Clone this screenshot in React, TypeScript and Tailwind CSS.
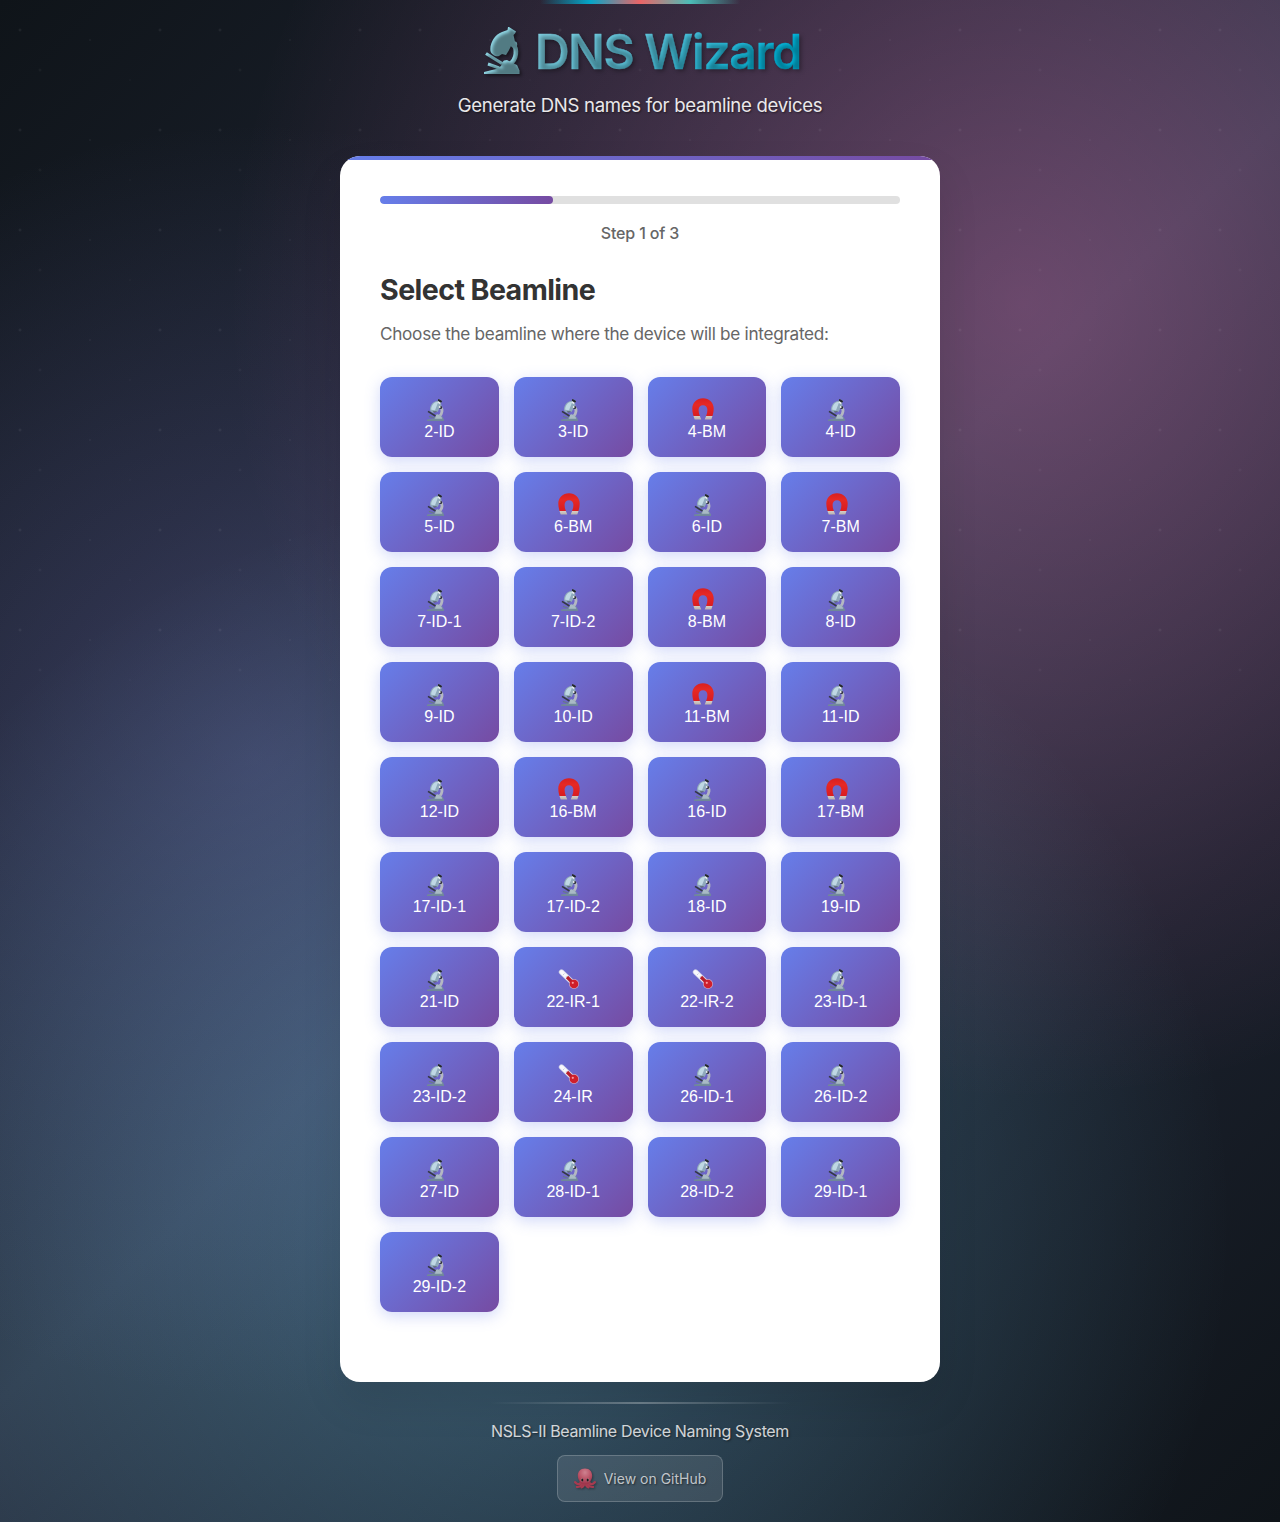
const beamlines = [
  "2-ID", "3-ID", "4-BM", "4-ID",
  "5-ID", "6-BM", "6-ID", "7-BM",
  "7-ID-1", "7-ID-2", "8-BM", "8-ID",
  "9-ID", "10-ID", "11-BM", "11-ID",
  "12-ID", "16-BM", "16-ID", "17-BM",
  "17-ID-1", "17-ID-2", "18-ID", "19-ID",
  "21-ID", "22-IR-1", "22-IR-2", "23-ID-1",
  "23-ID-2", "24-IR", "26-ID-1", "26-ID-2",
  "27-ID", "28-ID-1", "28-ID-2", "29-ID-1",
  "29-ID-2",
];

const BODY = "M18 5 L23.5 3 L24 0 L25 0 L32 4.5 L31 6.5 L29.5 8 L31 15 L27 19 L24.5 24 L22 28 L18 27 L15 29 C12 30 7.5 28 6.5 24 C5.5 17 10 8 18 5Z";
const BASE = "M17 39 L18 35.5 L20 33.5 L23 33 L26 34.5 L33 38 L35.5 43.5 V47 H0 V45 L12 42Z";
const ARM = "M29 17 C33.5 22 33 32 26 37";
const STAGE = "M2 26.5 L18 36.5";
const MIRROR = "M4 37 L15 41";

/* One-colour microscope used for the heading and its shadow. */
function MicroscopeShape({ color }: { color: string }) {
  return (
    <g fill={color} stroke={color} strokeWidth="0">
      <path d={BODY} />
      <path d={ARM} fill="none" strokeWidth="4.6" />
      <circle cx="30" cy="17.5" r="3.2" />
      <path d={STAGE} fill="none" strokeWidth="3.2" />
      <path d={MIRROR} fill="none" strokeWidth="3" />
      <path d={BASE} />
    </g>
  );
}

function TitleMicroscope() {
  return (
    <svg width="36" height="47" viewBox="0 0 36 47" className="mt-[-4px] overflow-visible">
      <defs>
        <filter id="soft" x="-30%" y="-30%" width="160%" height="160%">
          <feGaussianBlur stdDeviation="1.7" />
        </filter>
      </defs>
      <MicroscopeShape color="#8fd6e4" />
      <g filter="url(#soft)" transform="translate(2 2)" opacity="0.42">
        <MicroscopeShape color="#000" />
      </g>
    </svg>
  );
}

function Microscope() {
  return (
    <svg width="17" height="22" viewBox="0 0 36 47" className="mt-px">
      <path d={ARM} fill="none" stroke="#b4b8c2" strokeWidth="6" />
      <path d={BASE} fill="#7990a1" />
      <path d="M19 34 L22 32.5 L26 34 L31 38 L32 42 H17Z" fill="#a9bac5" />
      <path d={BODY} fill="#8fa9bb" />
      <path d="M18 7 L24 6 L17 24 L9 23 C8 17 12 10 18 7Z" fill="#bfd8e4" />
      <path d="M24 0 L25 0 L32 4.5 L31 7 L29 8 L23 4Z" fill="#23252b" />
      <path d="M24 5 L29 8 L27 11 L23 8Z" fill="#e6e9ec" />
      <path d="M12 26 L21 26 L20 28 L15 29.5Z" fill="#59616f" />
      <circle cx="29" cy="18" r="3.2" fill="#2d303a" />
      <circle cx="27" cy="17" r="2" fill="#f3f5f7" />
      <path d={STAGE} fill="none" stroke="#343943" strokeWidth="3.6" />
      <path d={MIRROR} fill="none" stroke="#66788a" strokeWidth="2.6" />
      <path d="M0 45.3 H36" stroke="#6f8799" strokeWidth="3.2" />
    </svg>
  );
}

function Magnet() {
  return (
    <svg width="22" height="22" viewBox="0 0 22 22">
      <defs>
        <linearGradient id="magnet" gradientUnits="userSpaceOnUse" x1="0" y1="0" x2="0" y2="22">
          <stop offset="0" stopColor="#d81f20" />
          <stop offset="0.3" stopColor="#e62925" />
          <stop offset="0.82" stopColor="#d91c20" />
          <stop offset="0.82" stopColor="#d4cdc7" />
          <stop offset="1" stopColor="#b5aeab" />
        </linearGradient>
      </defs>
      <path
        d="M11 0.3 C17.2 0.3 21.7 4.8 21.7 10.5 C21.7 14.5 20.6 18 19.3 21.5 H12.7 C14 18.5 15.4 15.5 15.4 11.8 C15.4 9.2 13.7 7.2 11 7.2 C8.3 7.2 6.6 9.2 6.6 11.8 C6.6 15.5 8 18.5 9.3 21.5 H2.7 C1.4 18 0.3 14.5 0.3 10.5 C0.3 4.8 4.8 0.3 11 0.3Z"
        fill="url(#magnet)"
      />
    </svg>
  );
}

function Thermometer() {
  return (
    <svg width="22" height="22" viewBox="0 0 22 22">
      <path d="M3.5 4 L15 15" stroke="#c9cbe6" strokeWidth="5.4" strokeLinecap="round" />
      <path d="M3.5 4 L15 15" stroke="#f8f8fc" strokeWidth="4" strokeLinecap="round" />
      <circle cx="16" cy="16" r="5" fill="#c9a6c4" />
      <path d="M9 9 L15 15" stroke="#b51d2c" strokeWidth="3.2" />
      <circle cx="16" cy="16" r="4.3" fill="#cf1f2b" />
      <circle cx="14.8" cy="14.8" r="1.1" fill="#f79a9f" />
      <path d="M5 7 l1.5 -1.5 M7.5 9.3 l1.5 -1.5" stroke="#b9bdd0" strokeWidth="0.7" />
    </svg>
  );
}

function Octopus() {
  return (
    <svg width="22" height="21" viewBox="0 0 22 21" className="mr-px opacity-90 drop-shadow-[1px_1px_1px_rgba(0,0,0,0.4)]">
      <defs>
        <radialGradient id="octopus" cx="0.5" cy="0.25" r="0.7">
          <stop offset="0" stopColor="#dd8795" />
          <stop offset="0.6" stopColor="#c75367" />
          <stop offset="1" stopColor="#a8334a" />
        </radialGradient>
      </defs>
      <g fill="none" stroke="#b2384e" strokeWidth="2.3" strokeLinecap="round">
        <path d="M7 13.5 C6.5 17 3.5 17 1.2 14.2" />
        <path d="M15 13.5 C15.5 17 18.5 17 20.8 14.2" />
        <path d="M8.5 15 C8 18 5 19 3 18.8" />
        <path d="M13.5 15 C14 18 17 19 19 18.8" />
        <path d="M10 15.5 C10 18 9 19 7.5 19.3 M12 15.5 C12 18 13 19 14.5 19.3" />
      </g>
      <path d="M11 0.5 C15.8 0.5 18.3 4 18.2 8 C18 11.5 16.5 12.5 15.5 15 L12.5 16.5 H9.5 L6.5 15 C5.5 12.5 4 11.5 3.8 8 C3.7 4 6.2 0.5 11 0.5Z" fill="url(#octopus)" />
      <ellipse cx="8.1" cy="12" rx="1.4" ry="1.7" fill="#d58d97" />
      <ellipse cx="13.9" cy="12" rx="1.4" ry="1.7" fill="#d58d97" />
      <ellipse cx="8.3" cy="12" rx="1.1" ry="1.5" fill="#1d1318" />
      <ellipse cx="13.7" cy="12" rx="1.1" ry="1.5" fill="#1d1318" />
    </svg>
  );
}

function DeviceIcon({ name }: { name: string }) {
  if (name.includes("BM")) return <Magnet />;
  if (name.includes("IR")) return <Thermometer />;
  return <Microscope />;
}

function BeamlineButton({ name }: { name: string }) {
  return (
    <button className="flex h-20 flex-col items-center rounded-xl bg-[linear-gradient(135deg,#667eea_0%,#764ba2_100%)] pt-[21px] font-['Liberation_Sans',sans-serif] text-base leading-[18px] text-white shadow-[0_4px_15px_rgba(102,126,234,0.3)]">
      <span className="mr-2 flex h-[22px] w-[22px] items-center justify-center">
        <DeviceIcon name={name} />
      </span>
      <span className="mt-[3px]">{name}</span>
    </button>
  );
}

export default function App() {
  return (
    <div className="relative h-[1522px] overflow-hidden bg-[radial-gradient(circle_at_20%_50%,rgba(120,119,198,0.3)_0%,transparent_50%),radial-gradient(circle_at_80%_20%,rgba(255,119,198,0.3)_0%,transparent_50%),radial-gradient(circle_at_40%_80%,rgba(120,219,255,0.3)_0%,transparent_50%),linear-gradient(135deg,#0f1419_0%,#1a202c_25%,#2d3748_50%,#1a202c_75%,#0f1419_100%)] font-['Inter',sans-serif]">
      <div className="pointer-events-none absolute inset-x-0 top-0 h-[720px] bg-[radial-gradient(2px_2px_at_20px_30px,rgba(255,255,255,0.3),transparent),radial-gradient(2px_2px_at_40px_70px,rgba(255,255,255,0.2),transparent),radial-gradient(1px_1px_at_90px_40px,rgba(255,255,255,0.4),transparent),radial-gradient(1px_1px_at_130px_80px,rgba(255,255,255,0.2),transparent),radial-gradient(2px_2px_at_160px_30px,rgba(255,255,255,0.3),transparent)] bg-[length:200px_100px] opacity-30" />
      <div className="relative mx-auto flex w-[600px] flex-col">
        <header className="flex h-[156px] flex-col items-center">
          <div className="h-1 w-[200px] bg-[linear-gradient(90deg,transparent,#00b4d8,#ff6b6b,#4ecdc4,transparent)] opacity-90" />
          <h1 className="mt-[19px] flex h-[58px] items-center gap-[15px] pl-[9px] text-[48px] font-semibold leading-[58px] tracking-[-1.25px]">
            <TitleMicroscope />
            <span className="bg-[linear-gradient(135deg,#86d3e4_0%,#5cc6de_40%,#00b8de_85%)] bg-clip-text pr-1 text-transparent [text-shadow:2px_2px_4px_rgba(0,0,0,0.35)] [-webkit-text-stroke:0.4px_transparent]">
              DNS Wizard
            </span>
          </h1>
          <p className="mt-[11px] text-[18.6px] leading-[27px] tracking-[-0.32px] text-white/90 [text-shadow:1px_1px_2px_rgba(0,0,0,0.5)]">
            Generate DNS names for beamline devices
          </p>
        </header>

        <main className="relative h-[1226px] overflow-hidden rounded-[20px] bg-white px-10 pt-10 shadow-[0_20px_40px_rgba(0,0,0,0.1)]">
          <div className="absolute inset-x-0 top-0 h-1 bg-[linear-gradient(90deg,#667eea,#764ba2)]" />
          <div className="h-2 overflow-hidden rounded bg-[#e0e0e0]">
            <div className="h-full w-1/3 rounded bg-[linear-gradient(90deg,#667eea,#764ba2)]" />
          </div>
          <p className="mt-4 text-center text-base font-medium leading-[26px] tracking-[-0.15px] text-[#666]">Step 1 of 3</p>
          <h2 className="mt-[22px] text-[28.6px] font-bold leading-[44px] tracking-[-0.58px] text-[#333]">Select Beamline</h2>
          <p className="mt-2 text-[17.2px] leading-7 tracking-[-0.3px] text-[#666]">Choose the beamline where the device will be integrated:</p>
          <div className="mt-[29px] grid grid-cols-4 gap-[15px]">
            {beamlines.map((name) => (
              <BeamlineButton key={name} name={name} />
            ))}
          </div>
        </main>

        <footer className="flex flex-col items-center pt-5">
          <div className="h-0.5 w-[300px] bg-[linear-gradient(90deg,transparent,rgba(255,255,255,0.3),transparent)]" />
          <p className="mt-[14px] text-base leading-[26px] tracking-[-0.36px] text-white/80 [text-shadow:1px_1px_2px_rgba(0,0,0,0.5)]">
            NSLS-II Beamline Device Naming System
          </p>
          <a className="mt-[11px] flex h-[47px] w-[166px] items-center justify-center gap-[7px] rounded-lg border border-white/20 bg-white/10 text-sm text-white/70 [text-shadow:1px_1px_2px_rgba(0,0,0,0.5)]">
            <Octopus />
            <span>View on GitHub</span>
          </a>
        </footer>
      </div>
    </div>
  );
}
